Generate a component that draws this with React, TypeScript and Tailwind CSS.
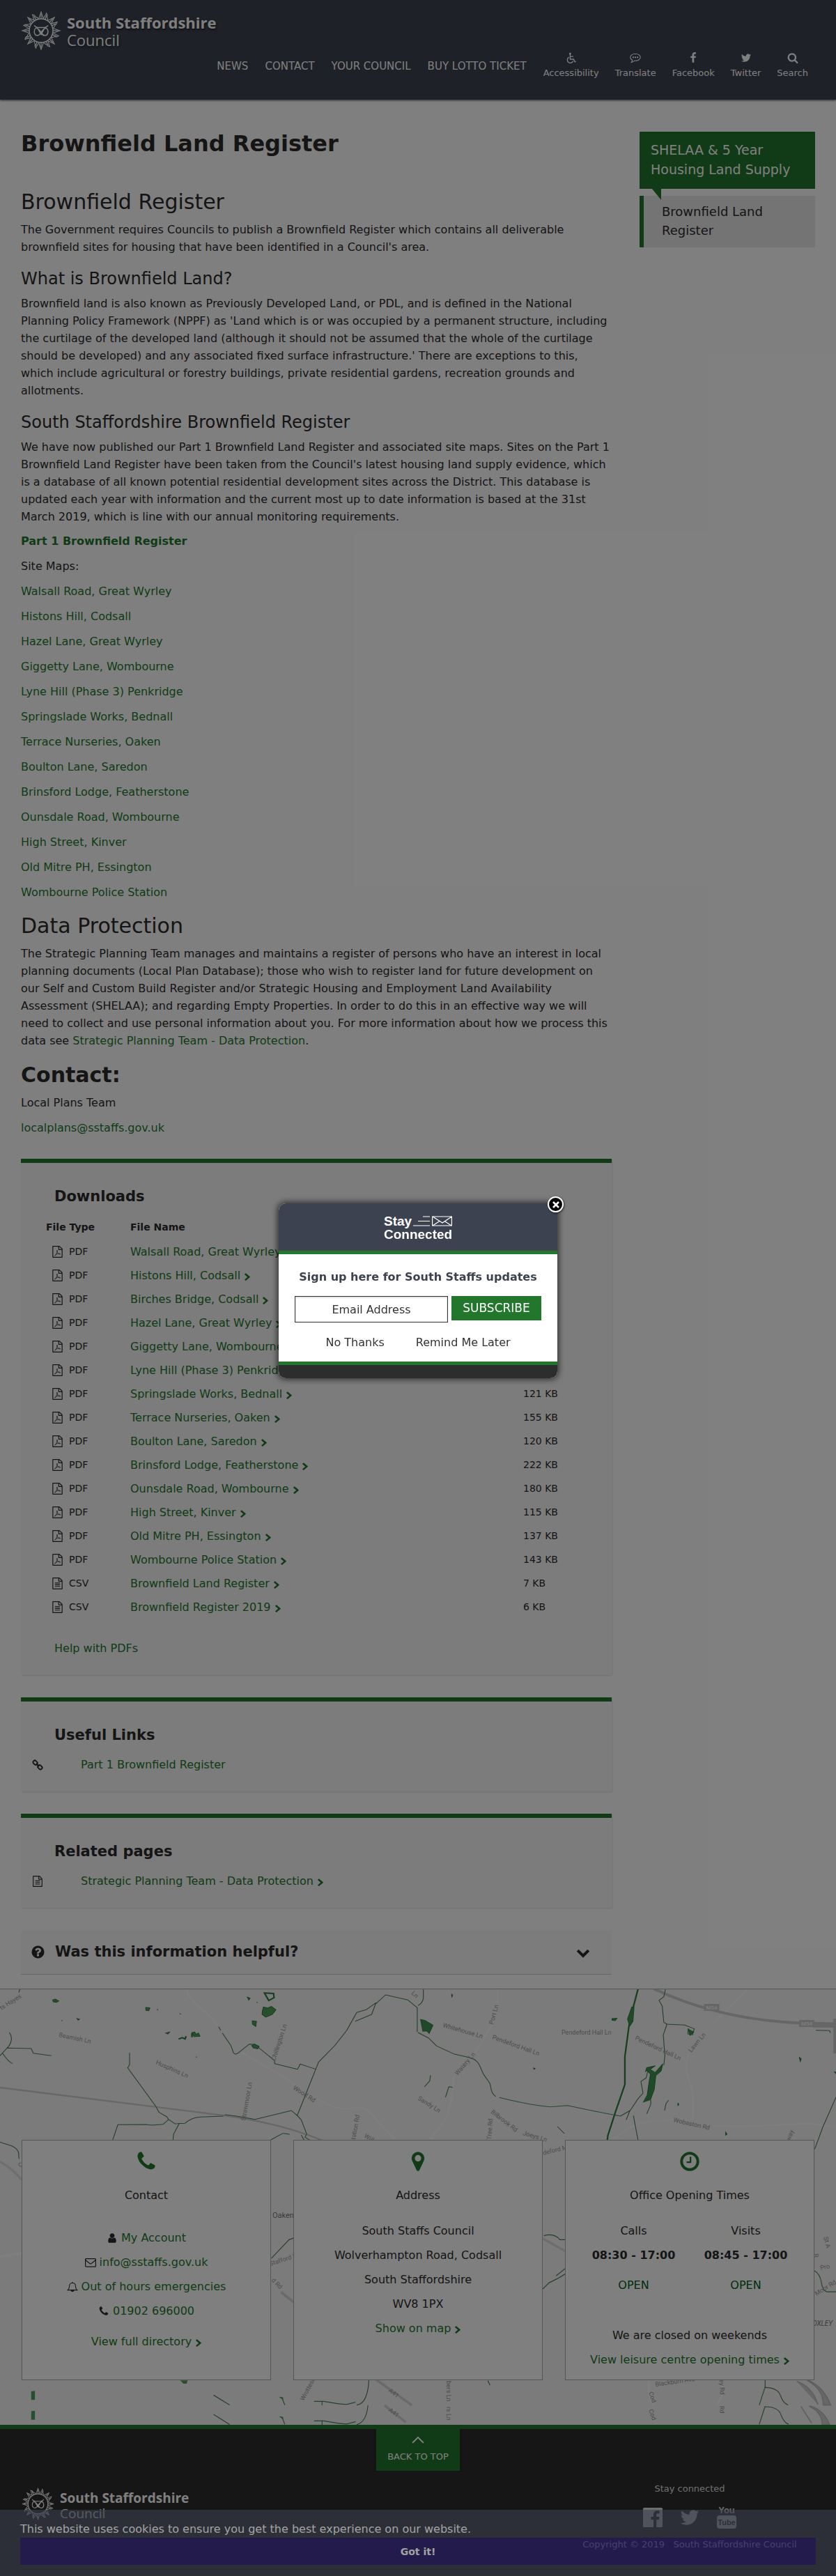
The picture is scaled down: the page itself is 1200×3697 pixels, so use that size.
import React from "react";

const PATHS = {
  search:
    "M1216 832q0-185-131.5-316.5t-316.5-131.5-316.5 131.5-131.5 316.5 131.5 316.5 316.5 131.5 316.5-131.5 131.5-316.5zm512 832q0 52-38 90t-90 38q-54 0-90-38l-343-342q-179 124-399 124-143 0-273.5-55.5t-225-150-150-225-55.5-273.5 55.5-273.5 150-225 225-150 273.5-55.5 273.5 55.5 225 150 150 225 55.5 273.5q0 220-124 399l343 343q37 37 37 90z",
  twitter:
    "M1684 408q-67 98-162 167 1 14 1 42 0 130-38 259.5t-115.5 248.5-184.5 210.5-258 146-323 54.5q-271 0-496-145 35 4 78 4 225 0 401-138-105-2-188-64.5t-114-159.5q33 5 61 5 43 0 85-11-112-23-185.5-111.5t-73.5-205.5v-4q68 38 146 41-66-44-105-115t-39-154q0-88 44-163 121 149 294.5 238.5t371.5 99.5q-8-38-8-74 0-134 94.5-228.5t228.5-94.5q140 0 236 102 109-21 205-78-37 115-142 178 93-10 186-50z",
  facebook:
    "M1343 12v264h-157q-86 0-116 36t-30 108v189h293l-39 296h-254v759h-306v-759h-255v-296h255v-218q0-186 104-288.5t277-102.5q147 0 228 12z",
  phone:
    "M1600 1240q0 27-10 70.5t-21 68.5q-21 50-122 106-94 51-186 51-27 0-53-3.5t-57.5-12.5-47-14.5-55.5-20.5-49-18q-98-35-175-83-127-79-264-216t-216-264q-48-77-83-175-3-9-18-49t-20.5-55.5-14.5-47-12.5-57.5-3.5-53q0-92 51-186 56-101 106-122 25-11 68.5-21t70.5-10q14 0 21 3 18 6 53 76 11 19 30 54t35 63.5 31 53.500q3 4 17.500 25t21.500 35.500 7 28.500q0 20-28.500 50t-62 55-62 53-28.500 46q0 9 5 22.500t8.500 20.500 14 24 11.500 19q76 137 174 235t235 174q2 1 19 11.500t24 14 20.500 8.500 22.500 5q18 0 46-28.500t53-62 55-62 50-28.500q14 0 28.500 7t35.500 21.500 25 17.500q25 15 53.500 31t63.500 35 54 30q70 35 76 53 3 7 3 21z",
  marker:
    "M1152 640q0-106-75-181t-181-75-181 75-75 181 75 181 181 75 181-75 75-181zm256 0q0 109-33 179l-364 774q-16 33-47.500 52t-67.500 19-67.500-19-46.500-52l-365-774q-33-70-33-179 0-212 150-362t362-150 362 150 150 362z",
  clock:
    "M1024 544v448q0 14-9 23t-23 9h-320q-14 0-23-9t-9-23v-64q0-14 9-23t23-9h224v-352q0-14 9-23t23-9h64q14 0 23 9t9 23zm416 352q0-148-73-273t-198-198-273-73-273 73-198 198-73 273 73 273 198 198 273 73 273-73 198-198 73-273zm224 0q0 209-103 385.5t-279.500 279.500-385.500 103-385.500-103-279.500-279.500-103-385.500 103-385.500 279.500-279.500 385.500-103 385.500 103 279.500 279.500 103 385.500z",
  user:
    "M1536 1399q0 109-62.500 187t-150.500 78h-854q-88 0-150.500-78t-62.500-187q0-85 8.500-160.500t31.500-152 58.500-131 94-89 134.500-34.500q131 128 313 128t313-128q76 0 134.500 34.500t94 89 58.500 131 31.500 152 8.500 160.500zm-256-887q0 159-112.500 271.500t-271.500 112.500-271.500-112.500-112.500-271.500 112.500-271.500 271.500-112.500 271.500 112.500 112.500 271.500z",
  question:
    "M1024 1376v-192q0-14-9-23t-23-9h-192q-14 0-23 9t-9 23v192q0 14 9 23t23 9h192q14 0 23-9t9-23zm256-672q0-88-55.500-163t-138.500-116-170-41q-243 0-371 213-15 24 8 42l132 100q7 6 19 6 16 0 25-12 53-68 86-92 34-24 86-24 48 0 85.500 26t37.500 59q0 38-20 61t-68 45q-63 28-115.500 86.500t-52.500 125.500v36q0 14 9 23t23 9h192q14 0 23-9t9-23q0-19 21.500-49.500t54.500-49.500q32-18 49-28.500t46-35 44.500-48 28-60.500 12.500-81zm384 192q0 209-103 385.500t-279.500 279.500-385.500 103-385.500-103-279.500-279.500-103-385.500 103-385.500 279.500-279.500 385.500-103 385.500 103 279.500 279.500 103 385.500z",
  text:
    "M1596 380q28 28 48 76t20 88v1152q0 40-28 68t-68 28h-1344q-40 0-68-28t-28-68v-1600q0-40 28-68t68-28h896q40 0 88 20t76 48zm-444-244v376h376q-10-29-22-41l-313-313q-12-12-41-22zm384 1528v-1024h-416q-40 0-68-28t-28-68v-416h-768v1536h1280zm-1024-864q0-14 9-23t23-9h704q14 0 23 9t9 23v64q0 14-9 23t-23 9h-704q-14 0-23-9t-9-23v-64zm736 224q14 0 23 9t9 23v64q0 14-9 23t-23 9h-704q-14 0-23-9t-9-23v-64q0-14 9-23t23-9h704zm0 256q14 0 23 9t9 23v64q0 14-9 23t-23 9h-704q-14 0-23-9t-9-23v-64q0-14 9-23t23-9h704z",
  page:
    "M1596 380q28 28 48 76t20 88v1152q0 40-28 68t-68 28h-1344q-40 0-68-28t-28-68v-1600q0-40 28-68t68-28h896q40 0 88 20t76 48zm-444-244v376h376q-10-29-22-41l-313-313q-12-12-41-22zm384 1528v-1024h-416q-40 0-68-28t-28-68v-416h-768v1536h1280z",
  right:
    "M1363 877l-742 742q-19 19-45 19t-45-19l-166-166q-19-19-19-45t19-45l531-531-531-531q-19-19-19-45t19-45l166-166q19-19 45-19t45 19l742 742q19 19 19 45t-19 45z",
  down:
    "M1683 808l-742 741q-19 19-45 19t-45-19l-742-741q-19-19-19-45.500t19-45.500l166-165q19-19 45-19t45 19l531 531 531-531q19-19 45-19t45 19l166 165q19 19 19 45.500t-19 45.500z",
};

function Glyph({ name, className, children }: { name: keyof typeof PATHS; className: string; children?: React.ReactNode }) {
  return (
    <svg viewBox="0 0 1792 1792" fill="currentColor" className={className} aria-hidden="true">
      <path d={PATHS[name]} />
      {children}
    </svg>
  );
}

function Chevron() {
  return (
    <svg viewBox="340 -20 1050 1660" preserveAspectRatio="none" fill="currentColor" className="ml-[6px] inline-block h-[11px] w-2 align-[-2px]" aria-hidden="true">
      <path d={PATHS.right} />
    </svg>
  );
}

function PdfIcon() {
  return (
    <Glyph name="page" className="size-[17px]">
      <path
        d="M470 1500q150-80 270-330t150-450q-20-80-70-60t10 200q60 190 190 300t240 130q110-10 70-70t-260-40-340 90-260 230z"
        fill="none"
        stroke="currentColor"
        strokeWidth="75"
      />
    </Glyph>
  );
}

function Wheelchair() {
  return (
    <svg viewBox="0 0 16 16" className="size-4" fill="none" stroke="currentColor" strokeWidth="1.3" aria-hidden="true">
      <circle cx="6.4" cy="2" r="1.5" fill="currentColor" stroke="none" />
      <path d="M6.4 3v7h5l1.800 3.800 1.700-.8M6.400 6.200h4.600M4.700 7.200a4.300 4.300 0 1 0 6 5.300" />
    </svg>
  );
}

function Comment() {
  return (
    <svg viewBox="0 0 16 16" className="size-4" aria-hidden="true">
      <path
        d="M8 2.200c4 0 7.200 2.200 7.200 5s-3.200 5-7.200 5l-1-.1c-1.300 1.300-2.700 2-4.700 2.300.9-.9 1.400-1.700 1.500-3C1.900 10.400.8 9 .8 7.200c0-2.800 3.200-5 7.200-5z"
        fill="none"
        stroke="currentColor"
        strokeWidth="1.100"
      />
      <path d="M4 6.300h1.900v1.900H4zM7.100 6.300H9v1.900H7.100zM10.200 6.300h1.900v1.900h-1.900z" fill="currentColor" />
    </svg>
  );
}

function Envelope() {
  return (
    <svg viewBox="0 0 16 16" className="size-4" fill="none" stroke="currentColor" strokeWidth="1.200" aria-hidden="true">
      <rect x=".6" y="2.600" width="14.800" height="11.600" rx="1" />
      <path d="M.8 4.500C3 7 5.500 8.300 6.800 9.400c.8.600 1.600.6 2.400 0C10.500 8.300 13 7 15.200 4.500" />
    </svg>
  );
}

function Bell() {
  return (
    <svg viewBox="0 0 16 16" className="size-4" fill="none" stroke="currentColor" strokeWidth="1.100" aria-hidden="true">
      <path d="M8 1v1.500M1.300 12.600C3 11 3.700 9.200 3.700 6.500 3.700 4 5.500 2.500 8 2.500s4.300 1.500 4.300 4c0 2.700.7 4.500 2.400 6.100z" />
      <path d="M6.200 13c.2 1.200.9 1.800 1.800 1.800s1.600-.6 1.800-1.800" fill="currentColor" />
    </svg>
  );
}

function LinkIcon() {
  return (
    <svg viewBox="0 0 16 16" className="size-4" fill="none" stroke="currentColor" strokeWidth="1.900" aria-hidden="true">
      <rect x="1.300" y="2.300" width="6.600" height="4.800" rx="2" transform="rotate(45 4.600 4.700)" />
      <rect x="8.100" y="8.900" width="6.600" height="4.800" rx="2" transform="rotate(45 11.400 11.300)" />
      <path d="M5.900 6l4.200 4.200" />
    </svg>
  );
}

const STRAIGHT = [0, 45, 90, 135, 180, 225, 270, 315];
const CURVED = [22, 67, 112, 157, 202, 247, 292, 337];

function Sun({ className }: { className: string }) {
  return (
    <svg viewBox="0 0 56 56" className={className} fill="none" stroke="currentColor" aria-hidden="true">
      {STRAIGHT.map((a) => (
        <g key={a} transform={`rotate(${a} 28 28)`}>
          <path d="M24.800 10.500L28 1l3.200 9.500" strokeWidth="1.100" />
          <path d="M28 4v7" strokeWidth="1.200" />
        </g>
      ))}
      {CURVED.map((a) => (
        <g key={a} transform={`rotate(${a} 28 28)`}>
          <path d="M25 10.500c-1.500-3 1.500-5 .5-8.500 3.500 1.500 2.500 4 3.500 5.200.6.900 2.200 1.300 2 3.300" strokeWidth="1.100" />
          <path d="M27 4.500c.8 2-.8 4 .8 6" strokeWidth="1.300" />
        </g>
      ))}
      <circle cx="28" cy="28" r="17" strokeWidth="1.500" />
      <path
        d="M18 20.500q3 3.500 6 3h8q3 .5 6-3M21.500 23.500c-5 3-4 11.500 1.500 11.500 4 0 7-10.500 11.500-10.500s5 10.500-1 10.500c-4.500 0-7.500-10.500-12-10.500M23.500 25.500l4.500 8 4.500-8M34.500 23.500c5 3 4 11.500-1.500 11.500-3 0-4-2-5-3.500"
        strokeWidth="1.400"
      />
    </svg>
  );
}

const SITES = [
  "Walsall Road, Great Wyrley",
  "Histons Hill, Codsall",
  "Hazel Lane, Great Wyrley",
  "Giggetty Lane, Wombourne",
  "Lyne Hill (Phase 3) Penkridge",
  "Springslade Works, Bednall",
  "Terrace Nurseries, Oaken",
  "Boulton Lane, Saredon",
  "Brinsford Lodge, Featherstone",
  "Ounsdale Road, Wombourne",
  "High Street, Kinver",
  "Old Mitre PH, Essington",
  "Wombourne Police Station",
];

const FILES = [
  ["PDF", "Walsall Road, Great Wyrley", "129 KB"],
  ["PDF", "Histons Hill, Codsall", "118 KB"],
  ["PDF", "Birches Bridge, Codsall", "134 KB"],
  ["PDF", "Hazel Lane, Great Wyrley", "126 KB"],
  ["PDF", "Giggetty Lane, Wombourne", "131 KB"],
  ["PDF", "Lyne Hill (Phase 3) Penkridge", "140 KB"],
  ["PDF", "Springslade Works, Bednall", "121 KB"],
  ["PDF", "Terrace Nurseries, Oaken", "155 KB"],
  ["PDF", "Boulton Lane, Saredon", "120 KB"],
  ["PDF", "Brinsford Lodge, Featherstone", "222 KB"],
  ["PDF", "Ounsdale Road, Wombourne", "180 KB"],
  ["PDF", "High Street, Kinver", "115 KB"],
  ["PDF", "Old Mitre PH, Essington", "137 KB"],
  ["PDF", "Wombourne Police Station", "143 KB"],
  ["CSV", "Brownfield Land Register", "7 KB"],
  ["CSV", "Brownfield Register 2019", "6 KB"],
];

const LABELS: [string, number, number, number][] = [
  ["ts Hayes", 2, 30, -32],
  ["Beamish Ln", 84, 68, 12],
  ["Husphins Ln", 223, 107, 24],
  ["Chillington Ln", 395, 103, -72],
  ["Strawmoor Ln", 352, 189, -80],
  ["Wood Rd", 420, 143, 33],
  ["tation Rd", 510, 216, -80],
  ["Wilkes", 522, 212, 32],
  ["Ln", 590, 6, 45],
  ["Whitehouse Ln", 635, 54, 16],
  ["Port Ln", 708, 51, -75],
  ["Pendeford Hall Ln", 706, 71, 20],
  ["Pendeford Hall Ln", 806, 65, 0],
  ["Pendeford Hall Ln", 911, 72, 25],
  ["Lawn Ln", 992, 91, -50],
  ["Watery Ln", 657, 124, -50],
  ["Sandy Ln", 599, 158, 32],
  ["Bilbrook Rd", 704, 177, 38],
  ["Tree Rd", 705, 216, -86],
  ["Joeys Ln", 750, 209, 16],
  ["deford M", 780, 238, -14],
  ["Wobaston Rd", 966, 190, 13],
  ["way", 1134, 218, -70],
  ["Stafford Ln", 388, 397, -18],
  ["d Rd", 389, 418, 45],
  ["Wrottesley Rd", 436, 591, -62],
  ["A41", 557, 577, 38],
  ["A41", 557, 605, 38],
  ["bers Ln", 641, 562, 90],
  ["rs Ln", 641, 599, 90],
  ["Blackburn Ave", 941, 570, -8],
  ["Cod", 931, 579, 70],
  ["Cod", 931, 604, 70],
  ["ey Rd", 1033, 560, 88],
  ["Rd", 1033, 598, 88],
  ["Moor Rd", 1172, 440, -32],
  ["Pro", 1178, 403, -12],
  ["St A", 1182, 356, 75],
  ["R", 1168, 380, 80],
  ["Co", 30, 256, -50],
];

function MapBackdrop() {
  return (
    <svg
      viewBox="0 0 1200 625"
      preserveAspectRatio="xMidYMin slice"
      className="absolute inset-0 size-full"
      aria-hidden="true"
      fill="none"
    >
      <rect width="1200" height="625" fill="#f7f7f7" />
      <g transform="scale(.3827 .3333) translate(0 -44)">
        <g stroke="#ffffff" strokeOpacity=".7" strokeWidth="7">
          <path d="M700 44c10 60 60 70 120 160M905 315c90 60 140 90 200 140M1190 515c90 60 100 40 150 40 60 0 40 30 140 130" />
        </g>
        <path d="M0 467Q300 510 840 587Q1050 620 1210 695" stroke="#cfcfcf" strokeWidth="7" />
        <path d="M0 785Q50 820 82 865" stroke="#dcdcdc" strokeWidth="9" />
        <g stroke="#4a8055" strokeWidth="3" strokeLinejoin="round">
          <path d="M35 229c14 22 8 50-10 70L0 330M25 297l92 2 8 20 67 11M10 320c10 16 20 36 38 44" />
          <path d="M486 318v50l-7 14 105 165 12 26 30 20 6 12-20 20-42 4-23-3-105 1-19 65M631 603l25 20 37-2c20-18 35-26 60-27l85-4M673 620l-22 48-2 24" />
          <path d="M820 205l8 15M834 232l32 54 10 32 6 5 8-2 45-41 20 1 75 70v13l86 24 10-22 58 22M843 584c50 4 90 16 113 20l137-38 23 23-1-2 80-230 60-70 45-65 38-78 35-12 37-30-16 50-62 30M1408 108l38-40 84 22 35 33v105" />
          <path d="M1116 589l14 17 20 60-6 15 18 12M1016 692l45-28 25 4M1130 672l10 20M75 44l-5 14" />
          <path d="M0 702c30 14 45 10 62 30 15 18 4 20 10 42" />
        </g>
        <g fill="#4f9f5a" stroke="#2f7f3c" strokeWidth="3">
          <path d="M198 90l10-4 12 8-8 6-12-2zM547 122l15 2-4 12-11-2zM984 138l4-18 16 4 14-6 17 14-14 20-24 12-14-12zM946 180l16 2-3 22-12-10zM944 286l10-6 18 10-6 10-16-4zM928 78l10 4-5 8zM289 170l9 3-5 4zM622 232l14-4-6 8zM720 230l8 18 22-2-6-14-8 6-6-10z" />
          <path d="M992 60l34 2 2 18-20 12zM670 258l14-6 10 6 4-12M720 232v18" fill="none" strokeWidth="6" />
          <path d="M589 130l4 4M674 148l4 4M963 98l3 4M735 334l3 3M231 177l3 3" />
        </g>
      </g>
      <g transform="translate(600 0) scale(.3827 .3333) translate(0 -44)">
        <g stroke="#ffffff" strokeOpacity=".7" strokeWidth="7">
          <path d="M298 44q4 90-20 150l-65 125M135 420q-10 150-40 200l-50 70M1235 44l-110 130M1015 320c-20 80-4 90 12 150q10 60 4 130M730 690q80-70 130-75l140-15M1110 632l100 2 190-8 60-4 110 14" />
        </g>
        <path d="M885 42q240 130 540 147l150 4M1480 202l100 1M1564 170v150" stroke="#cccccc" strokeWidth="12" />
        <g stroke="#4a8055" strokeWidth="3" strokeLinejoin="round">
          <path d="M20 44v40q-4 20-20 30M0 230l40 24 30 34 64 34 60 16c40 12 40 50 52 72l24 40c6 30 4 40 22 56M47 414l-3 24-20 26M130 466l-14-3-13 46M523 635l26 30" />
          <path d="M733 584l26 6 36-24-14 40M808 588l17 104M928 44l-6 32-18 16 12 24 6 70 12 8-14 46 6 90-4 40M930 194l70 4 36 16-6 26-18-4 2-24M862 395l-6 30-20 16 8 50-20 26-30 52M873 520v20l-15 40M940 522l-10 14-5 30M1492 220l52 2 3 10M1568 508l-50 130-30 94" />
        </g>
        <path d="M305 510q120 34 190 40l66-6q80 20 170 40" stroke="#578a60" strokeWidth="3" />
        <path d="M825 44l-16 70-18 90-15 130v120l-36 120-28 100-2 20" stroke="#2f7f3c" strokeWidth="6" />
        <g fill="#3f9350" stroke="#2f7f3c" strokeWidth="3">
          <path d="M10 174l16 4 30 20-14 36-8-10h-16zM802 120l8 2-4 60-12 20-8-30zM918 365l-6 30-20 20-6 60-14 44-26 10 14-30 6-50 6-40-14-16-4 4 4-16 32-8-20 16 20 14zM1014 216l20 12-14 14zM728 170l18-1-6 10-12-2zM126 64l4 6-3 6zM1430 336l7 8-3 10zM975 534l3 6-3 6zM1154 660l5 8-5 4zM1562 400h8v10zM434 383l5 2-4 3z" />
        </g>
      </g>
      <g transform="translate(0 205) scale(.3827 .4062)">
        <path d="M0 440l82-12" stroke="#ffffff" strokeWidth="8" />
        <path d="M1054 565l60 45M1405 870l140 95" stroke="#d5d5d5" strokeWidth="9" />
        <g stroke="#4a8055" strokeWidth="3">
          <path d="M1018 446l66-66 18-6M801 929l60 35M801 997l60 36M1384 870q-4 90-46 94M1380 965q-6 60-42 68M1178 951h36q60 10 86 11l34-8M1178 1020h36q60 10 86 11l34-8M1208 951v14M1208 1020v14M1060 944l8 20M1060 1012l8 20" />
        </g>
        <path d="M117 916l14-2v32h-14zM117 986l14-2v32h-14zM676 877h28l-4 12h-12zM1046 935l16 2v10zM1046 1004l16 2v10z" fill="#4f9f5a" />
        <path d="M1442 965l80 60" stroke="#d5d5d5" strokeWidth="9" />
      </g>
      <g transform="translate(600 205) scale(.3827 .4062)">
        <g stroke="#4a8055" strokeWidth="3">
          <path d="M472 366q40-10 60 14h20M468 554l24-22 30-14 32-18M518 508l34-26M1302 876v24l-22 64M1300 902q50 0 60 30 10 26 28 32M1302 968l-22 64M1302 970q50 0 60 30 10 26 28 32M1487 490q20 10 26 40 4 30 20 34h40M262 878l8 16" />
        </g>
        <path d="M468 376l84 44" stroke="#dadada" strokeWidth="8" />
        <path d="M1420 880q60 20 80 82M1460 878q60 30 60 86h28q-24-60-80-86zM1436 968l40 60M1466 968q50 20 50 66h28q-20-50-70-66z" stroke="#bdbdbd" fill="#cfcfcf" strokeWidth="4" />
        <path d="M866 880v40q0 20 18 44M1140 880v50l-16 30" stroke="#ffffff" strokeWidth="8" />
      </g>
      <g fill="#cccccc">
        <rect x="1010.500" y="21" width="22" height="10" />
        <rect x="1147" y="44" width="22" height="10" />
      </g>
      <g className="font-['Roboto',sans-serif] font-bold" fontSize="8" fill="#f7f7f7" textAnchor="middle">
        <text x="1021.500" y="29">M54</text>
        <text x="1158" y="52">M54</text>
      </g>
      <g className="font-['Roboto',sans-serif]" fontSize="9" fill="#999999">
        {LABELS.map(([t, x, y, r], i) => (
          <text key={i} transform={`translate(${x} ${y}) rotate(${r})`}>
            {t}
          </text>
        ))}
      </g>
      <g className="font-['Roboto',sans-serif]" fontSize="11" fill="#777777">
        <text x="391" y="328">Oaken</text>
        <text x="1161" y="483" fontStyle="italic" fontSize="10">
          LOXLEY
        </text>
      </g>
    </svg>
  );
}

function Panel({ title, children }: { title: string; children: React.ReactNode }) {
  return (
    <section className="mt-8 border-t-[6px] border-[#23772d] bg-[#f8f8f8] pt-8 pb-[26px] shadow-[1px_1px_2px_rgba(0,0,0,0.12)]">
      <h2 className="px-12 text-[21px] leading-8 font-bold">{title}</h2>
      {children}
    </section>
  );
}

function Card({ icon, title, children }: { icon: keyof typeof PATHS; title: string; children: React.ReactNode }) {
  return (
    <section className="min-h-[345px] border border-[#aaaaaa] bg-white pt-[14px] text-center">
      <Glyph name={icon} className="mx-auto size-8 text-[#23772d]" />
      <h2 className="mt-5 leading-[25px]">{title}</h2>
      {children}
    </section>
  );
}

const link = "text-[#23772d] hover:underline";

function ContactLine({ icon, children }: { icon: React.ReactNode; children: React.ReactNode }) {
  return (
    <li className="flex h-[35px] items-center justify-center gap-[5px]">
      {icon}
      <a href="#" className={link}>
        {children}
      </a>
    </li>
  );
}

function NavIcon({ label, children }: { label: string; children: React.ReactNode }) {
  return (
    <a href="#" className="flex flex-col items-center gap-1 text-[13px] leading-5">
      {children}
      {label}
    </a>
  );
}

export default function App() {
  return (
    <div className="relative min-h-screen bg-white font-['DejaVu_Sans',sans-serif] text-base leading-[25px] text-[#2b2b2b]">
      <header className="bg-[#3c424f] px-[30px] pt-4 pb-[25px] text-white shadow-[0_1px_3px_rgba(0,0,0,0.7)]">
        <a href="#" className="flex h-14 w-fit items-start gap-2">
          <Sun className="h-14 w-[58px]" />
          <span className="pt-1 font-['Open_Sans',sans-serif] text-[22px] leading-[25px] [text-shadow:1px_2px_3px_rgba(0,0,0,0.5)]">
            <strong className="block font-bold">South Staffordshire</strong>
            Council
          </span>
        </a>
        <nav className="flex h-[46px] items-center justify-end gap-6 pr-[10px] text-[15px]">
          <a href="#">NEWS</a>
          <a href="#">CONTACT</a>
          <a href="#">YOUR COUNCIL</a>
          <a href="#">BUY LOTTO TICKET</a>
          <div className="flex gap-[23px]">
            <NavIcon label="Accessibility">
              <Wheelchair />
            </NavIcon>
            <NavIcon label="Translate">
              <Comment />
            </NavIcon>
            <NavIcon label="Facebook">
              <Glyph name="facebook" className="size-4" />
            </NavIcon>
            <NavIcon label="Twitter">
              <Glyph name="twitter" className="size-4" />
            </NavIcon>
            <NavIcon label="Search">
              <Glyph name="search" className="size-4" />
            </NavIcon>
          </div>
        </nav>
      </header>

      <div className="flex items-start gap-10 px-[30px] pb-5">
        <main className="min-w-0 flex-1 pt-[43px]">
          <h1 className="text-[32px] leading-10 font-bold">Brownfield Land Register</h1>
          <h2 className="mt-11 text-3xl leading-10">Brownfield Register</h2>
          <p className="mt-[7px]">
            The Government requires Councils to publish a Brownfield Register which contains all deliverable brownfield
            sites for housing that have been identified in a Council's area.
          </p>
          <h3 className="mt-[17px] text-2xl">What is Brownfield Land?</h3>
          <p className="mt-[7px]">
            Brownfield land is also known as Previously Developed Land, or PDL, and is defined in the National Planning
            Policy Framework (NPPF) as 'Land which is or was occupied by a permanent structure, including the curtilage
            of the developed land (although it should not be assumed that the whole of the curtilage should be
            developed) and any associated fixed surface infrastructure.' There are exceptions to this, which include
            agricultural or forestry buildings, private residential gardens, recreation grounds and allotments.
          </p>
          <h3 className="mt-[17px] text-2xl">South Staffordshire Brownfield Register</h3>
          <p className="mt-[7px]">
            We have now published our Part 1 Brownfield Land Register and associated site maps. Sites on the Part 1
            Brownfield Land Register have been taken from the Council's latest housing land supply evidence, which is a
            database of all known potential residential development sites across the District. This database is updated
            each year with information and the current most up to date information is based at the 31st March 2019,
            which is line with our annual monitoring requirements.
          </p>
          <div className="mt-[10px] flex flex-col gap-[11px]">
            <p className="font-bold">
              <a href="#" className={link}>
                Part 1 Brownfield Register
              </a>
            </p>
            <p>Site Maps:</p>
            {SITES.map((s) => (
              <p key={s}>
                <a href="#" className={link}>
                  {s}
                </a>
              </p>
            ))}
          </div>
          <h2 className="mt-4 text-3xl leading-10">Data Protection</h2>
          <p className="mt-[7px]">
            The Strategic Planning Team manages and maintains a register of persons who have an interest in local
            planning documents (Local Plan Database); those who wish to register land for future development on our Self
            and Custom Build Register and/or Strategic Housing and Employment Land Availability Assessment (SHELAA); and
            regarding Empty Properties. In order to do this in an effective way we will need to collect and use personal
            information about you. For more information about how we process this data see{" "}
            <a href="#" className={link}>
              Strategic Planning Team - Data Protection
            </a>
            .
          </p>
          <h2 className="mt-[17px] text-3xl leading-10 font-bold">Contact:</h2>
          <div className="mt-[7px] flex flex-col gap-[11px]">
            <p>Local Plans Team</p>
            <p>
              <a href="#" className={link}>
                localplans@sstaffs.gov.uk
              </a>
            </p>
          </div>

          <Panel title="Downloads">
            <table className="mt-[9px] ml-9 table-fixed text-left">
              <thead>
                <tr className="h-[37px] text-sm">
                  <th className="w-[121px]">File Type</th>
                  <th className="w-[564px]">File Name</th>
                  <th>Size</th>
                </tr>
              </thead>
              <tbody>
                {FILES.map(([type, name, size]) => (
                  <tr key={name + type} className="h-[34px]">
                    <td className="text-sm">
                      <span className="flex items-center gap-2 pl-2">
                        {type === "PDF" ? <PdfIcon /> : <Glyph name="text" className="size-[17px]" />}
                        {type}
                      </span>
                    </td>
                    <td>
                      <a href="#" className={link}>
                        {name}
                        <Chevron />
                      </a>
                    </td>
                    <td className="text-sm">{size}</td>
                  </tr>
                ))}
              </tbody>
            </table>
            <p className="mt-[30px] px-12">
              <a href="#" className={link}>
                Help with PDFs
              </a>
            </p>
          </Panel>

          <Panel title="Useful Links">
            <p className="mt-[14px] flex items-center gap-[54px] pl-4">
              <LinkIcon />
              <a href="#" className={link}>
                Part 1 Brownfield Register
              </a>
            </p>
          </Panel>

          <Panel title="Related pages">
            <p className="mt-[14px] flex items-center gap-[54px] pl-4">
              <Glyph name="text" className="size-4" />
              <a href="#" className={link}>
                Strategic Planning Team - Data Protection
                <Chevron />
              </a>
            </p>
          </Panel>

          <button
            type="button"
            className="mt-8 flex h-16 w-full items-center gap-[14px] border-b border-[#cccccc] bg-[#f8f8f8] pr-[31px] pl-[14px] text-left text-[21px] font-bold"
          >
            <Glyph name="question" className="size-[21px]" />
            <span className="flex-1">Was this information helpful?</span>
            <Glyph name="down" className="size-5" />
          </button>
        </main>

        <aside className="w-[252px] shrink-0 pt-[46px]">
          <div className="relative bg-[#23772d] px-4 pt-3 pb-[14px] text-[19px] leading-7 text-white">
            <a href="#">SHELAA &amp; 5 Year Housing Land Supply</a>
            <svg viewBox="0 0 13 16" className="absolute top-full left-[18px] z-10 h-4 w-[13px]" aria-hidden="true">
              <path d="M0 0h13v16z" fill="#23772d" />
            </svg>
          </div>
          <div className="mt-[10px] border-l-[6px] border-[#23772d] bg-[#e9e9e9] pt-[9px] pr-10 pb-[11px] pl-[26px] text-lg leading-[27px]">
            <a href="#">Brownfield Land Register</a>
          </div>
        </aside>
      </div>

      <div className="relative overflow-hidden border-t border-[#aaaaaa] px-[31px] pt-[216px] pb-16">
        <MapBackdrop />
        <div className="relative grid grid-cols-3 gap-8">
          <Card icon="phone" title="Contact">
            <ul className="mt-[31px]">
              <ContactLine icon={<Glyph name="user" className="size-4" />}>My Account</ContactLine>
              <ContactLine icon={<Envelope />}>info@sstaffs.gov.uk</ContactLine>
              <ContactLine icon={<Bell />}>Out of hours emergencies</ContactLine>
              <ContactLine icon={<Glyph name="phone" className="size-4" />}>01902 696000</ContactLine>
            </ul>
            <p className="mt-[9px] leading-[35px]">
              <a href="#" className={link}>
                View full directory
                <Chevron />
              </a>
            </p>
          </Card>
          <Card icon="marker" title="Address">
            <div className="mt-[21px] leading-[35px]">
              <p>South Staffs Council</p>
              <p>Wolverhampton Road, Codsall</p>
              <p>South Staffordshire</p>
              <p>WV8 1PX</p>
              <a href="#" className={link}>
                Show on map
                <Chevron />
              </a>
            </div>
          </Card>
          <Card icon="clock" title="Office Opening Times">
            <div className="mt-[21px] grid grid-cols-2 px-[17px] leading-[35px]">
              {[
                ["Calls", "08:30 - 17:00"],
                ["Visits", "08:45 - 17:00"],
              ].map(([name, hours]) => (
                <div key={name}>
                  <p>{name}</p>
                  <p className="font-bold">{hours}</p>
                  <p className="mt-2 text-[#005c1a]">OPEN</p>
                </div>
              ))}
            </div>
            <p className="mt-[37px] leading-[35px]">We are closed on weekends</p>
            <a href="#" className={`${link} leading-[35px]`}>
              View leisure centre opening times
              <Chevron />
            </a>
          </Card>
        </div>
      </div>

      <footer className="border-t-[6px] border-[#23772d] bg-[#2d2d2d] px-[31px] pb-[35px] text-[13px] leading-5 text-white">
        <a href="#" className="mx-auto flex h-[60px] w-[120px] flex-col items-center bg-[#23772d] pt-[11px]">
          <svg viewBox="0 0 18 10" className="h-[10px] w-[18px]" fill="none" stroke="currentColor" strokeWidth="1.800" aria-hidden="true">
            <path d="M1 9l8-8 8 8" />
          </svg>
          <span className="mt-[9px]">BACK TO TOP</span>
        </a>
        <div className="grid grid-cols-3 gap-8 pt-4">
          <a href="#" className="col-span-2 flex items-start gap-2 pt-2">
            <Sun className="h-[47px] w-[47px]" />
            <span className="pt-1 font-['Open_Sans',sans-serif] text-[19px] leading-[22px]">
              <strong className="block font-bold">South Staffordshire</strong>
              Council
            </span>
          </a>
          <div className="text-center text-[#dddddd]">
            <p>Stay connected</p>
            <div className="mt-[14px] flex items-center justify-center gap-6">
              <a href="#" aria-label="Facebook">
                <svg viewBox="0 0 28 28" className="size-7" aria-hidden="true">
                  <path
                    d="M1.500 0h25Q28 0 28 1.500v25q0 1.500-1.500 1.500h-7.200V17.200h3.600l.6-4.200h-4.200v-2.700c0-1.200.4-2 2.100-2h2.200V4.500c-.4 0-1.700-.2-3.200-.2-3.200 0-5.400 2-5.400 5.500V13h-3.600v4.200H15V28H1.500Q0 28 0 26.500v-25Q0 0 1.500 0z"
                    fill="currentColor"
                  />
                </svg>
              </a>
              <a href="#" aria-label="Twitter">
                <Glyph name="twitter" className="size-[30px]" />
              </a>
              <a href="#" aria-label="YouTube">
                <svg viewBox="0 0 28 34" className="h-[34px] w-7" aria-hidden="true">
                  <g className="font-['Liberation_Sans_Narrow','Liberation_Sans',sans-serif] font-bold" textAnchor="middle">
                    <text x="14" y="11" fontSize="13" fill="currentColor">
                      You
                    </text>
                    <rect y="14" width="28" height="19" rx="4" fill="currentColor" />
                    <text x="14" y="28" fontSize="11" fill="#2d2d2d">
                      Tube
                    </text>
                  </g>
                </svg>
              </a>
            </div>
            <p className="mt-3">Copyright © 2019 &nbsp; South Staffordshire Council</p>
          </div>
        </div>
      </footer>

      <div className="absolute inset-0 z-20 bg-black/50" />

      <div
        role="region"
        aria-label="Cookie notice"
        className="fixed inset-x-0 bottom-0 z-30 bg-[#3c424f] px-[29px] py-4 leading-6 text-white opacity-60"
      >
        <p>This website uses cookies to ensure you get the best experience on our website.</p>
        <button type="button" className="h-[39px] w-full bg-[#2e2171] text-sm font-bold">
          Got it!
        </button>
      </div>

      <div className="pointer-events-none fixed inset-0 z-40 flex items-center justify-center">
        <div
          role="dialog"
          aria-label="Stay Connected"
          className="pointer-events-auto relative mt-2 w-[400px] rounded-[10px] bg-white text-center text-[#333333] shadow-[0_0_8px_2px_rgba(0,0,0,0.6)]"
        >
          <div className="flex h-[73px] justify-center rounded-t-[10px] border-b-[5px] border-[#23772d] bg-[#3c424f] pt-4">
            <div className="w-[98px] text-left font-['Liberation_Sans',sans-serif] text-[19px] leading-[19px] font-bold text-white">
              <div className="flex items-center justify-between">
                Stay
                <svg viewBox="0 0 56 15" className="h-[15px] w-14" fill="none" stroke="currentColor" strokeWidth="1.200" aria-hidden="true">
                  <path d="M14 1h10M7 7.500h17M0 14h24M27.600 1h27.800v13H27.600zM28 1l14 9 13.500-9M28 14l10-6.500M55 14l-10-6.500" />
                </svg>
              </div>
              Connected
            </div>
          </div>
          <form className="px-[23px] pt-5 pb-[15px]" onSubmit={(e) => e.preventDefault()}>
            <label htmlFor="email" className="block font-bold text-[#3c424f]">
              Sign up here for South Staffs updates
            </label>
            <div className="mt-[15px] flex items-start gap-[5px]">
              <input
                id="email"
                type="email"
                placeholder="Email Address"
                className="h-[38px] w-[220px] border border-[#333333] bg-white text-center placeholder:text-[#333333] shadow-[inset_0_1px_3px_rgba(0,0,0,0.2)]"
              />
              <button type="submit" className="h-[35px] flex-1 bg-[#23772d] text-[17px] text-white">
                SUBSCRIBE
              </button>
            </div>
            <div className="mt-4 flex justify-center gap-[45px]">
              <button type="button">No Thanks</button>
              <button type="button">Remind Me Later</button>
            </div>
          </form>
          <div className="h-6 rounded-b-[10px] border-t-[5px] border-[#23772d] bg-[#2d2d2d]" />
          <button
            type="button"
            aria-label="Close"
            className="absolute -top-[10px] -right-[9px] flex size-[23px] items-center justify-center rounded-full border-2 border-white bg-black text-white shadow-[1px_1px_3px_rgba(0,0,0,0.6)]"
          >
            <svg viewBox="0 0 10 10" className="size-[10px]" stroke="currentColor" strokeWidth="2.600" aria-hidden="true">
              <path d="M1 1l8 8M9 1L1 9" />
            </svg>
          </button>
        </div>
      </div>
    </div>
  );
}
